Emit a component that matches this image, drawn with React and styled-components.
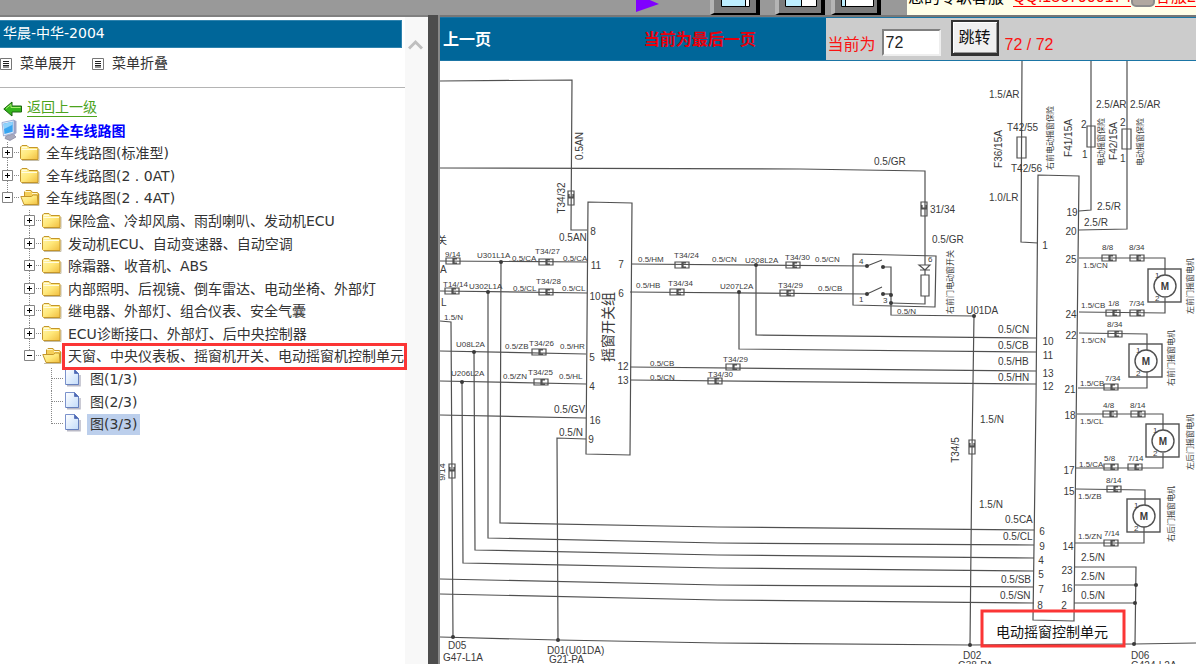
import React, { useState } from "react";
import styled, { createGlobalStyle } from "styled-components";

const GlobalStyle = createGlobalStyle`
  * {
    box-sizing: border-box;
  }

  body {
    margin: 0;
    overflow: hidden;
    background: #fff;
    color: #333;
    font-family: "DejaVu Sans", "Noto Sans CJK SC", sans-serif;
    font-size: 14px;
  }
`;

const Page = styled.div`
  display: flex;
  flex-direction: column;
  height: 100vh;
`;

/* top bar */

const TopBar = styled.header`
  display: flex;
  align-items: flex-end;
  justify-content: flex-end;
  flex: none;
  height: 15px;
  overflow: hidden;
  background: #999;
`;

const PlayIcon = styled.svg`
  width: 25px;
  height: 15px;
  margin-right: 50px;
`;

const ViewButton = styled.button`
  display: block;
  flex: none;
  width: 50px;
  height: 40px;
  margin-right: ${(props) => props.$gap}px;
  padding: 0;
  background: #7b7b7b;
  border: solid;
  border-width: 2px 4px 2px 4px;
  border-color: #b5b5b5 #000 #000 #b5b5b5;
  cursor: pointer;

  svg {
    display: block;
    width: 42px;
    height: 36px;
  }
`;

const Support = styled.div`
  display: flex;
  align-items: flex-end;
  flex: none;
  width: 289px;
  height: 15px;
  padding: 0 0 8px 1px;
  overflow: hidden;
  white-space: nowrap;
  background: #ffffe9;
  color: #000;
  font-family: "Liberation Sans", "Noto Sans CJK SC", sans-serif;
  font-size: 16px;
  line-height: 18px;

  a {
    color: #f00;
    text-decoration: none;
    border-bottom: 1px solid #f00;
  }

  a:first-of-type {
    margin-left: 9px;
  }
`;

const ChatBadge = styled.span`
  width: 26px;
  height: 20px;
  background: #b0a8a0;
  border: 2px solid #8c8c8c;
  border-radius: 5px;
`;

/* frames */

const Frames = styled.div`
  display: flex;
  flex: 1;
  min-height: 0;
`;

const Sidebar = styled.aside`
  display: flex;
  flex: none;
  width: 428px;
  border-top: 2px solid #808080;
`;

const SidebarBody = styled.div`
  flex: 1;
  min-width: 0;
  padding-top: 3px;
`;

const ScrollTrack = styled.div`
  flex: none;
  width: 23px;
  padding: 21px 3px;
  background: #f8f8f8;

  svg {
    display: block;
    width: 15px;
    height: 13px;
  }
`;

const Splitter = styled.div`
  flex: none;
  width: 12px;
  background: #4d4d4d;
  border-right: 2px solid #888;
`;

const CarTitle = styled.h1`
  margin: 0 3px 0 0;
  padding-left: 3px;
  background: #069;
  border: 1px solid #2f83ae;
  border-left: 0;
  color: #fff;
  font-size: 14px;
  font-weight: normal;
  line-height: 24px;
  height: 28px;
`;

const MenuBar = styled.nav`
  display: flex;
  height: 40px;
  padding-bottom: 12px;
  gap: 16px;
  border-bottom: 1px solid #b4b4b4;
`;

const MenuButton = styled.button`
  display: flex;
  align-items: center;
  gap: 8px;
  padding: 0;
  background: none;
  border: 0;
  color: #333;
  font: inherit;
  cursor: pointer;

  svg {
    width: 12px;
    height: 12px;
    margin-top: 4px;
  }
`;

const BackRow = styled.div`
  display: flex;
  align-items: center;
  gap: 4px;
  height: 23px;
  margin-top: 8px;
  padding-left: 3px;

  svg {
    width: 20px;
    height: 16px;
    margin-top: 3px;
  }

  a {
    color: #4ca31d;
    line-height: 17px;
    text-decoration: none;
    border-bottom: 1px solid #4ca31d;
  }
`;

const CurrentRow = styled.div`
  display: flex;
  align-items: center;
  gap: 4px;
  height: 23px;
  padding: 0 0 2px 1px;
  color: #00f;
  font-weight: bold;

  svg {
    width: 17px;
    height: 22px;
  }
`;

/* tree */

const TreeList = styled.ul`
  margin: 0;
  padding: 0 0 0 ${(props) => (props.$nested ? 22 : 0)}px;
  list-style: none;
`;

const TreeRow = styled.div`
  display: flex;
  height: 22px;

  li:nth-child(odd) > & {
    height: 23px;
  }
`;

const Branch = styled.span`
  flex: none;
  width: 20px;
  padding: 5px 0 0 2px;
  background-image: repeating-linear-gradient(#888 0 1px, transparent 1px 2px),
    repeating-linear-gradient(90deg, #888 0 1px, transparent 1px 2px);
  background-repeat: no-repeat;
  background-position: 7px 0, 8px 10px;
  background-size: 1px ${(props) => (props.$last ? "11px" : "100%")}, 12px 1px;
`;

const Toggle = styled.button`
  display: block;
  width: 11px;
  height: 11px;
  padding: 0;
  background: #fff;
  border: 0;
  cursor: pointer;

  svg {
    display: block;
  }
`;

const NodeIcon = styled.svg`
  flex: none;
  width: 20px;
  height: 20px;
  margin-right: 3px;
`;

const Label = styled.a`
  height: 21px;
  margin-top: 1px;
  padding: 0 ${(props) => (props.$marked ? 0 : 3)}px 0 3px;
  background: ${(props) => (props.$selected ? "#bccfec" : "transparent")};
  outline: ${(props) => (props.$marked ? "3px solid #fb3535" : "none")};
  color: #333;
  line-height: 20px;
  white-space: nowrap;
  text-decoration: none;
  position: relative;
`;

/* drawing pane */

const Viewer = styled.main`
  display: flex;
  flex-direction: column;
  flex: 1;
  min-width: 0;
  border-top: 2px solid #777;
`;

const PageBar = styled.div`
  display: flex;
  flex: none;
  height: 44px;
  background: #069;
  border: solid #1b75a5;
  border-width: 1px 0 1px 0;
  font-family: "Liberation Sans", "Noto Sans CJK SC", sans-serif;
  font-size: 16px;
`;

const PrevCell = styled.div`
  flex: 0 0 132px;
  padding: 10px 3px;
  line-height: 24px;

  a {
    color: #fff;
    font-weight: bold;
    text-decoration: none;
  }
`;

const Notice = styled.strong`
  flex: 1;
  padding: 10px 0 10px 2px;
  color: #e8000c;
  line-height: 24px;
  text-align: center;
`;

const JumpForm = styled.form`
  display: flex;
  align-items: flex-start;
  flex: 0 0 49%;
  padding: 2px 0 0 2px;
  background: #ccc;
  color: #fa1313;

  label,
  output {
    padding-top: 13px;
    line-height: 24px;
  }

  input {
    width: 59px;
    height: 27px;
    margin: 9px 10px 0 6px;
    padding: 0 2px;
    background: #fff;
    border: 2px solid;
    border-color: #808080 #eee #eee #808080;
    color: #222;
    font: inherit;
  }

  button {
    width: 48px;
    height: 36px;
    margin-right: 6px;
    padding: 0 0 4px;
    background: #f0f0f0;
    border: solid;
    border-width: 2px 2px 3px 2px;
    border-color: #333;
    box-shadow: inset 1px 1px #fff, inset -1px -1px #999;
    color: #111;
    font: inherit;
    cursor: pointer;
  }
`;

const Drawing = styled.svg`
  display: block;
  width: 100%;
  height: auto;
  font-family: "Liberation Sans", "Noto Sans CJK SC", sans-serif;
  fill: #3a3a3a;
`;

const treeData = [
  { label: "全车线路图(标准型)" },
  { label: "全车线路图(2 . 0AT)" },
  {
    label: "全车线路图(2 . 4AT)",
    children: [
      { label: "保险盒、冷却风扇、雨刮喇叭、发动机ECU" },
      { label: "发动机ECU、自动变速器、自动空调" },
      { label: "除霜器、收音机、ABS" },
      { label: "内部照明、后视镜、倒车雷达、电动坐椅、外部灯" },
      { label: "继电器、外部灯、组合仪表、安全气囊" },
      { label: "ECU诊断接口、外部灯、后中央控制器" },
      {
        label: "天窗、中央仪表板、摇窗机开关、电动摇窗机控制单元",
        marked: true,
        children: [
          { label: "图(1/3)", page: true },
          { label: "图(2/3)", page: true },
          { label: "图(3/3)", page: true, selected: true },
        ],
      },
    ],
  },
];

const wires = [
  "440,81 572,80 571,230 587,230",
  "440,168 800,169 925,171 925,265",
  "440,261 587,262",
  "440,291 587,293",
  "440,321 451,322 453,637",
  "440,351 586,354",
  "440,381 586,384",
  "440,415 586,418",
  "586,439 557,438 558,640",
  "501,262 500,523 718,527 1034,530",
  "488,292 488,538 718,543 1034,545",
  "474,352 475,550 718,555 1034,558",
  "462,382 463,563 718,568 1034,571",
  "440,579 718,585 1034,587",
  "440,594 718,600 1034,603",
  "440,637 558,640 718,643 970,645 1134,644 1196,643",
  "631,264 867,266 882,260",
  "630,292 867,294 882,287",
  "756,265 756,335 1036,338",
  "739,292 739,349 1036,352",
  "630,367 1036,371",
  "630,380 1036,384",
  "883,267 891,267 891,315 974,316 972,450 970,645",
  "883,294 891,294",
  "891,303 925,304 925,296",
  "925,270 925,275",
  "1022,61 1021,242 1038,243",
  "1091,61 1091,210 1079,211",
  "1127,61 1127,229 1079,230",
  "1079,258 1165,258 1165,276",
  "1165,298 1165,313 1079,312",
  "1079,333 1147,334 1147,350",
  "1147,372 1147,388 1078,388",
  "1077,414 1163,414 1163,431",
  "1163,453 1163,468 1076,468",
  "1076,489 1145,490 1145,506",
  "1144,527 1144,543 1075,543",
  "1075,567 1136,567 1135,644",
  "1075,585 1136,585",
  "1074,603 1135,603",
];

const outlines = [
  "588,202 632,203 630,455 586,454",
  "1038,175 1079,176 1076,430 1074,621 1033,620 1036,400",
  "853,254 936,256 935,307 853,305",
  "921,275 929,275 929,296 921,296",
  "1017,137 1026,137 1026,158 1017,158",
  "1087,126 1095,126 1095,147 1087,147",
  "1122,129 1131,129 1131,149 1122,149",
];

const dots = [
  [501, 262], [488, 292], [474, 352], [462, 382],
  [756, 265], [739, 292], [867, 266], [883, 267],
  [867, 294], [883, 294], [891, 295], [891, 303],
  [974, 316], [453, 637], [558, 640], [970, 645],
  [1136, 585], [1135, 603], [1134, 644],
];

// centre points of the plug symbols
const plugs = [
  [453, 261], [546, 262], [452, 291], [546, 292], [539, 352], [541, 382],
  [682, 265], [677, 292], [793, 265], [787, 293], [733, 367], [715, 381],
  [1109, 258], [1137, 258], [1113, 313], [1137, 313], [1115, 334], [1111, 387],
  [1110, 414], [1138, 414], [1111, 467], [1135, 467], [1114, 489], [1111, 543],
];

const uprightPlugs = [[571, 198], [924, 209], [972, 447], [452, 471]];

const motors = [[1165, 286], [1146, 361], [1163, 441], [1144, 516]];

// [left, middle, text]
const largeLabels = [
  [559, 237, "0.5AN"],
  [554, 409, "0.5/GV"],
  [559, 432, "0.5/N"],
  [874, 161, "0.5/GR"],
  [930, 209, "31/34"],
  [932, 239, "0.5/GR"],
  [966, 310, "U01DA"],
  [989, 94, "1.5/AR"],
  [1007, 127, "T42/55"],
  [1011, 168, "T42/56"],
  [989, 197, "1.0/LR"],
  [1096, 104, "2.5/AR"],
  [1130, 104, "2.5/AR"],
  [1097, 206, "2.5/R"],
  [1084, 222, "2.5/R"],
  [998, 329, "0.5/CN"],
  [998, 345, "0.5/CB"],
  [998, 361, "0.5/HB"],
  [998, 377, "0.5/HN"],
  [980, 419, "1.5/N"],
  [979, 504, "1.5/N"],
  [1005, 519, "0.5CA"],
  [1003, 536, "0.5/CL"],
  [1001, 579, "0.5/SB"],
  [1000, 595, "0.5/SN"],
  [1081, 557, "2.5/N"],
  [1081, 576, "2.5/N"],
  [1081, 595, "0.5/N"],
  [448, 645, "D05"],
  [443, 657, "G47-L1A"],
  [547, 650, "D01(U01DA)"],
  [549, 659, "G21-PA"],
  [963, 655, "D02"],
  [958, 665, "G38-PA"],
  [1131, 655, "D06"],
  [1131, 665, "G424-L2A"],
  [1081, 124, "2"],
  [1082, 154, "1"],
  [1120, 122, "2"],
  [1120, 158, "1"],
  [437, 240, "关"],
  [440, 269, "A"],
  [441, 302, "L"],
];

const smallLabels = [
  [445, 254, "9/14"],
  [477, 255, "U301L1A"],
  [512, 258, "0.5/CA"],
  [535, 251, "T34/27"],
  [563, 258, "0.5/CA"],
  [443, 284, "T14/14"],
  [469, 286, "U302L1A"],
  [513, 288, "0.5/CL"],
  [536, 281, "T34/28"],
  [562, 288, "0.5/CL"],
  [444, 317, "1.5/N"],
  [456, 344, "U08L2A"],
  [505, 346, "0.5/ZB"],
  [529, 343, "T34/26"],
  [560, 346, "0.5/HR"],
  [451, 373, "U206L2A"],
  [503, 376, "0.5/ZN"],
  [528, 372, "T34/25"],
  [559, 376, "0.5/HL"],
  [638, 259, "0.5/HM"],
  [674, 255, "T34/24"],
  [636, 285, "0.5/HB"],
  [668, 283, "T34/34"],
  [650, 363, "0.5/CB"],
  [650, 377, "0.5/CN"],
  [712, 259, "0.5/CN"],
  [745, 260, "U208L2A"],
  [785, 257, "T34/30"],
  [815, 259, "0.5/CN"],
  [720, 286, "U207L2A"],
  [778, 285, "T34/29"],
  [818, 288, "0.5/CB"],
  [723, 359, "T34/29"],
  [708, 374, "T34/30"],
  [897, 311, "0.5/N"],
  [859, 261, "4"],
  [859, 299, "1"],
  [883, 300, "3"],
  [928, 259, "6"],
  [1102, 247, "8/8"],
  [1129, 247, "8/34"],
  [1083, 265, "1.5/CN"],
  [1081, 305, "1.5/CB"],
  [1108, 303, "1/8"],
  [1129, 303, "7/34"],
  [1107, 324, "8/34"],
  [1081, 340, "1.5/CN"],
  [1080, 383, "1.5/CB"],
  [1105, 378, "7/34"],
  [1103, 405, "4/8"],
  [1130, 405, "8/14"],
  [1080, 421, "1.5/CL"],
  [1079, 464, "1.5/CA"],
  [1104, 458, "5/8"],
  [1128, 458, "7/14"],
  [1106, 480, "8/14"],
  [1078, 496, "1.5/ZB"],
  [1078, 536, "1.5/ZN"],
  [1104, 533, "7/14"],
];

// [centre, middle, text]
const pins = [
  [593, 231, "8"], [596, 265, "11"], [621, 264, "7"], [595, 296, "10"],
  [621, 293, "6"], [592, 357, "5"], [592, 386, "4"], [595, 420, "16"],
  [591, 439, "9"], [623, 366, "12"], [623, 380, "13"], [1045, 245, "1"],
  [1048, 341, "10"], [1048, 355, "11"], [1048, 373, "13"], [1048, 386, "12"],
  [1042, 531, "6"], [1042, 546, "9"], [1041, 560, "4"], [1041, 574, "5"],
  [1041, 589, "7"], [1040, 605, "8"], [1072, 212, "19"], [1071, 231, "20"],
  [1071, 259, "25"], [1071, 314, "24"], [1071, 335, "22"], [1070, 389, "21"],
  [1070, 415, "18"], [1069, 470, "17"], [1069, 491, "15"], [1068, 546, "14"],
  [1067, 570, "23"], [1067, 588, "16"], [1064, 605, "2"],
];

// [centre, middle, size, text], read from bottom to top
const uprightLabels = [
  [579, 146, 10, "0.5AN"],
  [561, 198, 10, "T34/32"],
  [442, 472, 9, "9/14"],
  [608, 327, 14, "摇窗开关组"],
  [950, 282, 8, "右前门电动窗开关"],
  [955, 450, 10, "T34/5"],
  [998, 149, 10, "F36/15A"],
  [1050, 138, 8, "右前电动摇窗保险"],
  [1068, 138, 10, "F41/15A"],
  [1101, 142, 8, "电动摇窗保险"],
  [1113, 141, 10, "F42/15A"],
  [1140, 142, 8, "电动摇窗保险"],
  [1190, 286, 8, "左前门摇窗电机"],
  [1171, 358, 8, "右前门摇窗电机"],
  [1190, 442, 8, "左后门摇窗电机"],
  [1171, 514, 8, "右后门摇窗电机"],
];

function FolderIcon({ open }) {
  return (
    <NodeIcon viewBox="0 0 20 20" aria-hidden="true">
      <defs>
        <linearGradient id="folder" x1="0" y1="0" x2="1" y2="1">
          <stop offset="0" stopColor="#fff6b0" />
          <stop offset="0.5" stopColor="#ffe87a" />
          <stop offset="1" stopColor="#f0bd3e" />
        </linearGradient>
      </defs>
      <path d="M2 18.5h17V7" fill="none" stroke="#c4bda8" />
      {open ? (
        <>
          <path d="M4.5 17.500V5L6 3.500h5L12.500 5.500h5l1 1v11z" fill="#f5cf5a" stroke="#c4962a" />
          <path d="M5 4.500h5.500M12 6.500h5" stroke="#fff8cf" fill="none" />
          <path d="M.8 9.500h10.500l2-1.500h4l.7 9.500H4z" fill="url(#folder)" stroke="#c4962a" />
        </>
      ) : (
        <>
          <path d="M.5 16.500V5L2 3.500h5L9 5.500h8.500l.5 1v11H1.500z" fill="url(#folder)" stroke="#c4962a" />
          <path d="M2 5.500h5M1.500 7.500h15.500" stroke="#fffbe0" fill="none" />
        </>
      )}
    </NodeIcon>
  );
}

function PageIcon() {
  return (
    <NodeIcon viewBox="0 0 20 20" aria-hidden="true">
      <defs>
        <linearGradient id="sheet" x1="0" y1="0" x2="1" y2="1">
          <stop offset="0" stopColor="#fff" />
          <stop offset="1" stopColor="#c3dcfa" />
        </linearGradient>
      </defs>
      <path d="M3 17.700h13V7" fill="none" stroke="#b9b9c6" strokeWidth="1.500" />
      <path d="M1.500 1.500h9l4 4v11h-13z" fill="url(#sheet)" stroke="#7b92cc" />
      <path d="M10.500 1.500v4h4z" fill="#4e69b4" stroke="#5f79be" />
      <path d="M14.500 6v10.500H2" fill="none" stroke="#6680be" />
    </NodeIcon>
  );
}

function ListIcon() {
  return (
    <svg viewBox="0 0 12 12" aria-hidden="true">
      <path d="M.5.5h11v11H.5z" fill="#fff" stroke="#777" />
      <path d="M3 3.500h6M3 5.500h6M3 7.500h6M3 9h6" stroke="#222" />
    </svg>
  );
}

function TreeNode({ node, last }) {
  const [open, setOpen] = useState(Boolean(node.children));

  return (
    <li>
      <TreeRow>
        <Branch $last={last}>
          {!node.page && (
            <Toggle
              type="button"
              aria-label={node.label}
              aria-expanded={open}
              onClick={() => setOpen(!open)}
            >
              <svg width="11" height="11" viewBox="0 0 11 11">
                <path d="M.5.5h10v10H.5z" fill="#fff" stroke="#848484" />
                <path d={open ? "M3 5.5h5" : "M3 5.5h5M5.5 3v5"} stroke="#000" />
              </svg>
            </Toggle>
          )}
        </Branch>
        {node.page ? <PageIcon /> : <FolderIcon open={open} />}
        <Label href="#" $marked={node.marked} $selected={node.selected}>
          {node.label}
        </Label>
      </TreeRow>
      {open && node.children && <Tree nodes={node.children} nested />}
    </li>
  );
}

function Tree({ nodes, nested }) {
  return (
    <TreeList $nested={nested}>
      {nodes.map((node, i) => (
        <TreeNode key={node.label} node={node} last={i === nodes.length - 1} />
      ))}
    </TreeList>
  );
}

function WiringDiagram() {
  return (
    <Drawing viewBox="440 61 756 603" role="img" aria-label="电动摇窗控制单元">
      <g fill="none" stroke="#505050" strokeWidth="1.2">
        {wires.map((points) => (
          <polyline key={points} points={points} />
        ))}
        {outlines.map((points) => (
          <polygon key={points} points={points} />
        ))}
        {plugs.map(([x, y]) => (
          <path key={`${x}-${y}`} d={`M${x - 7} ${y - 3}h14v6h-14zM${x} ${y - 3}v6M${x + 4} ${y - 2}h-3v4h3`} />
        ))}
        {uprightPlugs.map(([x, y]) => (
          <path key={`${x}-${y}`} d={`M${x - 3} ${y - 7}h6v14h-6zM${x - 3} ${y}h6M${x - 2} ${y - 4}v3h4v-3`} />
        ))}
        {motors.map(([x, y]) => (
          <g key={`${x}-${y}`}>
            <rect x={x - 17} y={y - 17} width="33" height="33" strokeWidth="1.4" />
            <circle cx={x} cy={y} r="11" fill="#fff" strokeWidth="1.4" />
          </g>
        ))}
        <path d="M919 265h11l-5 5zM920 270h10" />
      </g>
      {dots.map(([x, y]) => (
        <circle key={`${x}-${y}`} cx={x} cy={y} r="2" />
      ))}
      <g fontSize="10" dominantBaseline="central">
        {largeLabels.map(([x, y, text]) => (
          <text key={`${x}-${y}`} x={x} y={y}>{text}</text>
        ))}
      </g>
      <g fontSize="8" dominantBaseline="central">
        {smallLabels.map(([x, y, text]) => (
          <text key={`${x}-${y}`} x={x} y={y}>{text}</text>
        ))}
        {motors.map(([x, y]) => (
          <g key={`${x}-${y}`}>
            <text x={x - 10} y={y - 11}>1</text>
            <text x={x - 10} y={y + 12}>2</text>
          </g>
        ))}
      </g>
      <g fontSize="10" textAnchor="middle" dominantBaseline="central">
        {pins.map(([x, y, text]) => (
          <text key={`${x}-${y}`} x={x} y={y}>{text}</text>
        ))}
        {motors.map(([x, y]) => (
          <text key={`${x}-${y}`} x={x} y={y} fontWeight="bold">M</text>
        ))}
        {uprightLabels.map(([x, y, size, text]) => (
          <text key={`${x}-${y}`} x={x} y={y} fontSize={size} transform={`rotate(-90 ${x} ${y})`}>
            {text}
          </text>
        ))}
        <text x="1052" y="632" fontSize="14" fill="#111">电动摇窗控制单元</text>
      </g>
      <rect x="982" y="611" width="142" height="35" fill="none" stroke="#fb3535" strokeWidth="3" />
    </Drawing>
  );
}

function App() {
  const [page, setPage] = useState("72");

  return (
    <>
      <GlobalStyle />
      <Page>
        <TopBar>
          <PlayIcon viewBox="0 0 25 15" aria-hidden="true">
            <path d="M1-6L24 4 1 12z" fill="#8000ff" />
          </PlayIcon>
          <ViewButton type="button" aria-label="左右" $gap={15}>
            <svg viewBox="0 0 42 36">
              <path d="M7.500 4v25.500h28V4z" fill="#fff" stroke="#000" />
              <path d="M8 4h23v25H8z" fill="#bdeeff" />
              <path d="M31.500 4v25" stroke="#000" />
            </svg>
          </ViewButton>
          <ViewButton type="button" aria-label="平分" $gap={6}>
            <svg viewBox="0 0 42 36">
              <path d="M6.500 4v25.500h31V4z" fill="#fff" stroke="#000" />
              <path d="M7 4h15v25H7z" fill="#bdeeff" />
              <path d="M22.500 4v25" stroke="#000" />
            </svg>
          </ViewButton>
          <ViewButton type="button" aria-label="全图" $gap={26}>
            <svg viewBox="0 0 42 36">
              <path d="M6.500 4v25.500h32V4z" fill="#fff" stroke="#000" />
              <path d="M7 4h3v25H7z" fill="#bdeeff" />
              <path d="M10.500 4v25" stroke="#000" />
            </svg>
          </ViewButton>
          <Support>
            您的专职客服
            <a href="#">QQ:1567900174</a>
            <ChatBadge />
            <a href="#">客服2</a>
          </Support>
        </TopBar>

        <Frames>
          <Sidebar>
            <SidebarBody>
              <CarTitle>华晨-中华-2004</CarTitle>
              <MenuBar>
                <MenuButton type="button">
                  <ListIcon />
                  菜单展开
                </MenuButton>
                <MenuButton type="button">
                  <ListIcon />
                  菜单折叠
                </MenuButton>
              </MenuBar>
              <BackRow>
                <svg viewBox="0 0 20 16" aria-hidden="true">
                  <path d="M.8 8L9 1v4h9.500v6H9v4z" fill="#35b51c" stroke="#1d6410" strokeLinejoin="round" />
                  <path d="M3 7.500L8 3.500V6.500h9.500" fill="none" stroke="#a5ee6c" />
                </svg>
                <a href="#">返回上一级</a>
              </BackRow>
              <CurrentRow>
                <svg viewBox="0 0 17 22" aria-hidden="true">
                  <path d="M5 17l7-2 3 3-6 3.500-5-2z" fill="#a9a9bd" stroke="#85859c" strokeWidth=".7" />
                  <path d="M13 1l2.500 1v12L12 17z" fill="#a2a5c4" />
                  <path d="M1 3.500L13 1v13L2.500 17z" fill="#dfe9f8" stroke="#8ca0cc" strokeWidth=".8" />
                  <path d="M2.500 4.700L11.700 2.800v10L3.500 15z" fill="#38a5f0" />
                  <path d="M2.500 4.700L11.700 2.800v3L3 10z" fill="#8fd2fb" />
                </svg>
                当前:全车线路图
              </CurrentRow>
              <Tree nodes={treeData} />
            </SidebarBody>
            <ScrollTrack>
              <svg viewBox="0 0 15 13" aria-hidden="true">
                <path d="M1 10.500L7.500 4l6.500 6.500" fill="none" stroke="#bfbfbf" strokeWidth="3" />
              </svg>
            </ScrollTrack>
          </Sidebar>
          <Splitter />
          <Viewer>
            <PageBar>
              <PrevCell>
                <a href="#">上一页</a>
              </PrevCell>
              <Notice>当前为最后一页</Notice>
              <JumpForm onSubmit={(e) => e.preventDefault()}>
                <label htmlFor="page">当前为</label>
                <input id="page" value={page} onChange={(e) => setPage(e.target.value)} />
                <button type="submit">跳转</button>
                <output>72 / 72</output>
              </JumpForm>
            </PageBar>
            <WiringDiagram />
          </Viewer>
        </Frames>
      </Page>
    </>
  );
}

export default App;
